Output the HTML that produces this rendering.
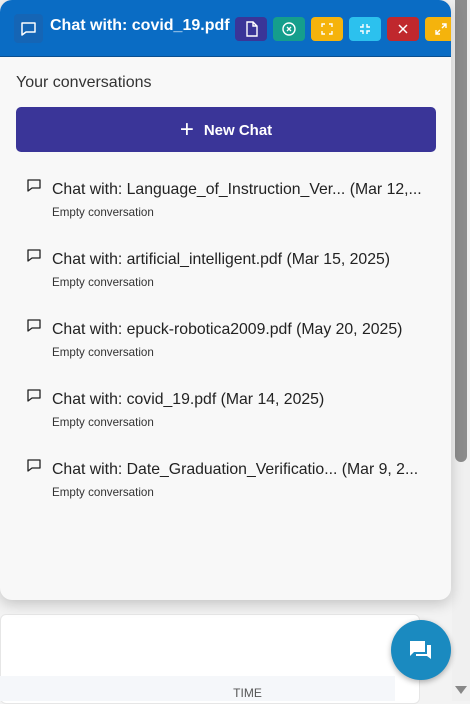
<!DOCTYPE html>
<html><head><style>
*{margin:0;padding:0;box-sizing:border-box}
body{width:470px;height:701px;overflow:hidden;background:#f3f3f3;font-family:"Liberation Sans",sans-serif;position:relative}
.sb{position:absolute;left:452px;top:0;width:18px;height:701px;background:#f0f0f0}
.thumb{position:absolute;left:455px;top:0;width:12px;height:462px;background:#8c8c8c;border-radius:0 0 6px 6px}
.arr{position:absolute;left:455px;top:686px;width:0;height:0;border-left:6px solid transparent;border-right:6px solid transparent;border-top:8px solid #888}
.bgcard{position:absolute;left:0;top:614px;width:420px;height:90px;background:#fff;border:1px solid #e6e6e6;border-radius:6px}
.bgrow{position:absolute;left:0;top:676px;width:395px;height:25px;background:#f5f7fa;font-size:12px;color:#555;text-align:center;padding-left:100px;padding-top:10px}
.panel{position:absolute;left:0;top:0;width:451px;height:600px;background:#f8f8f8;border-radius:12px;box-shadow:0 4px 14px rgba(0,0,0,.2);overflow:hidden}
.hdr{height:57px;background:#0a6cc4;border-bottom:1px solid #0a4f90;position:relative}
.hicon{position:absolute;left:14px;top:14px;width:29px;height:29px;background:#1565b5;border-radius:4px}
.title{position:absolute;left:50px;top:17px;color:#fff;font-weight:bold;font-size:16px;white-space:nowrap}
.btn{position:absolute;top:17px;width:32px;height:24px;border-radius:4px}
.lbl{position:absolute;left:16px;top:74px;font-size:16px;color:#333}
.nc{position:absolute;left:16px;top:107px;width:420px;height:45px;background:#3a3598;border-radius:5px;color:#fff;font-weight:bold;font-size:15px;text-align:center;line-height:45px}
.item{position:absolute;left:26px}
.item svg{position:absolute;left:0;top:0}
.t{position:absolute;left:26px;top:3px;font-size:15.8px;color:#222;white-space:nowrap}
.s{position:absolute;left:26px;top:28px;font-size:11.6px;color:#333;white-space:nowrap}
.fab{position:absolute;left:391px;top:620px;width:60px;height:60px;border-radius:50%;background:#1a8ac0;box-shadow:0 2px 6px rgba(0,0,0,.3)}
</style></head><body>
<div class="sb"></div><div class="thumb"></div><div class="arr"></div>
<div class="bgcard"></div><div class="bgrow">TIME</div>
<div class="panel">
 <div class="hdr">
  <div class="hicon"><svg width="29" height="29" viewBox="0 0 29 29"><path d="M8 9h13v9h-9l-4 3z" fill="none" stroke="#fff" stroke-width="1.5" stroke-linejoin="round"/></svg></div>
  <div class="title">Chat with: covid_19.pdf</div>
  <div class="btn" style="left:235px;background:#3a3598"><svg width="32" height="24"><path d="M12 5h6l4 4v10h-10z M18 5v4h4" fill="none" stroke="#fff" stroke-width="1.4"/></svg></div>
  <div class="btn" style="left:273px;background:#159e8c"><svg width="32" height="24"><circle cx="16" cy="12" r="6" fill="none" stroke="#fff" stroke-width="1.4"/><path d="M14 10l4 4M18 10l-4 4" stroke="#fff" stroke-width="1.3"/></svg></div>
  <div class="btn" style="left:311px;background:#f5b30c"><svg width="32" height="24"><path d="M11 10V7h3M18 7h3v3M21 14v3h-3M14 17h-3v-3" fill="none" stroke="#fff" stroke-width="1.4"/></svg></div>
  <div class="btn" style="left:349px;background:#2cc1ee"><svg width="32" height="24"><path d="M14 7v3h-3M18 7v3h3M21 14h-3v3M11 14h3v3" fill="none" stroke="#fff" stroke-width="1.4"/></svg></div>
  <div class="btn" style="left:387px;background:#c0282d"><svg width="32" height="24"><path d="M12 8l8 8M20 8l-8 8" stroke="#fff" stroke-width="1.5"/></svg></div>
  <div class="btn" style="left:425px;background:#f5b30c"><svg width="32" height="24"><path d="M11 17l4-4M11 13v4h4M21 7l-4 4M17 7h4v4" fill="none" stroke="#fff" stroke-width="1.4"/></svg></div>
 </div>
 <div class="lbl">Your conversations</div>
 <div class="nc"><span style="font-size:24px;font-weight:normal;vertical-align:-2px;margin-right:10px">+</span>New Chat</div>
 <div class="item" style="top:178px"><svg width="16" height="16"><path d="M2 2h12v8H6l-4 3z" fill="none" stroke="#222" stroke-width="1.3" stroke-linejoin="round"/></svg><div class="t">Chat with: Language_of_Instruction_Ver... (Mar 12,...</div><div class="s">Empty conversation</div></div>
 <div class="item" style="top:248px"><svg width="16" height="16"><path d="M2 2h12v8H6l-4 3z" fill="none" stroke="#222" stroke-width="1.3" stroke-linejoin="round"/></svg><div class="t">Chat with: artificial_intelligent.pdf (Mar 15, 2025)</div><div class="s">Empty conversation</div></div>
 <div class="item" style="top:318px"><svg width="16" height="16"><path d="M2 2h12v8H6l-4 3z" fill="none" stroke="#222" stroke-width="1.3" stroke-linejoin="round"/></svg><div class="t">Chat with: epuck-robotica2009.pdf (May 20, 2025)</div><div class="s">Empty conversation</div></div>
 <div class="item" style="top:388px"><svg width="16" height="16"><path d="M2 2h12v8H6l-4 3z" fill="none" stroke="#222" stroke-width="1.3" stroke-linejoin="round"/></svg><div class="t">Chat with: covid_19.pdf (Mar 14, 2025)</div><div class="s">Empty conversation</div></div>
 <div class="item" style="top:458px"><svg width="16" height="16"><path d="M2 2h12v8H6l-4 3z" fill="none" stroke="#222" stroke-width="1.3" stroke-linejoin="round"/></svg><div class="t">Chat with: Date_Graduation_Verificatio... (Mar 9, 2...</div><div class="s">Empty conversation</div></div>
</div>
<div class="fab"><svg width="60" height="60"><path d="M19 21h15v11H23l-4 4z" fill="#fff"/><path d="M36 25h4v14l-4-3h-11v-2h11z" fill="#fff"/></svg></div>
</body></html>
